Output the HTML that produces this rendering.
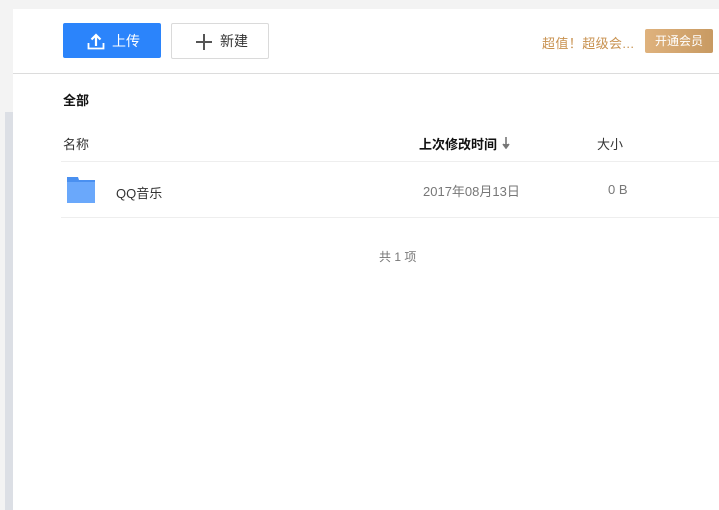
<!DOCTYPE html>
<html><head><meta charset="utf-8"><style>
*{margin:0;padding:0;box-sizing:border-box}
body{width:719px;height:510px;background:#f3f3f3;position:relative;overflow:hidden;font-family:"Liberation Sans","Noto Sans CJK SC",sans-serif;font-size:13px;color:#333}
.strip{position:absolute;left:5px;top:112px;width:8px;height:398px;background:#dcdfe5}
.panel{position:absolute;left:13px;top:9px;width:706px;height:501px;background:#fff}
.a{position:absolute;white-space:nowrap}
</style></head><body>
<div class="strip"></div>
<div class="panel"></div>
<div class="a" style="left:63px;top:23px;width:98px;height:35px;background:#2b84fb;border-radius:2px;color:#fff;font-size:14px;line-height:35px">
<svg class="a" style="left:24px;top:9px" width="18" height="18" viewBox="0 0 18 18"><path d="M9 14V3M4.5 7.5L9 3l4.5 4.5" stroke="#fff" stroke-width="2.2" fill="none"/><path d="M1.5 11v5.5h15V11" stroke="#fff" stroke-width="1.8" fill="none"/></svg>
<span class="a" style="left:49px;top:1px">上传</span></div>
<div class="a" style="left:171px;top:23px;width:98px;height:36px;border:1px solid #dadada;border-radius:2px;font-size:14px;line-height:34px;color:#333">
<svg class="a" style="left:23px;top:9px" width="18" height="18"><path d="M9 1v16M1 9h16" stroke="#555" stroke-width="2"/></svg>
<span class="a" style="left:48px;top:0">新建</span></div>
<div class="a" style="left:542px;top:33px;color:#c8914f;font-size:13px;letter-spacing:0.4px">超值！超级会...</div>
<div class="a" style="left:645px;top:29px;width:68px;height:24px;border-radius:2px;background:linear-gradient(90deg,#dfb27d,#c89a62);color:#fff;font-size:12px;line-height:24px;text-align:center">开通会员</div>
<div class="a" style="left:13px;top:73px;width:706px;height:1px;background:#dcdcdc"></div>
<div class="a" style="left:63px;top:90px;font-weight:bold;color:#111">全部</div>
<div class="a" style="left:63px;top:134px;color:#333">名称</div>
<div class="a" style="left:419px;top:134px;font-weight:bold;color:#111">上次修改时间</div>
<svg class="a" style="left:502px;top:137px" width="8" height="12"><path d="M4 0v10M1 7l3 4 3-4" stroke="#777" stroke-width="1.6" fill="#777"/></svg>
<div class="a" style="left:597px;top:134px;color:#333">大小</div>
<div class="a" style="left:61px;top:161px;width:658px;height:1px;background:#eeeeee"></div>
<svg class="a" style="left:67px;top:177px" width="28" height="26"><path d="M0 0h11l1 3h16v23H0z" fill="#4a90f0"/><rect x="0" y="5" width="28" height="21" fill="#6aa8fb"/></svg>
<div class="a" style="left:116px;top:183px;color:#333">QQ音乐</div>
<div class="a" style="left:423px;top:181px;color:#777">2017年08月13日</div>
<div class="a" style="left:608px;top:182px;color:#777">0 B</div>
<div class="a" style="left:61px;top:217px;width:658px;height:1px;background:#eeeeee"></div>
<div class="a" style="left:379px;top:248px;color:#777;font-size:12px">共 1 项</div>
</body></html>
